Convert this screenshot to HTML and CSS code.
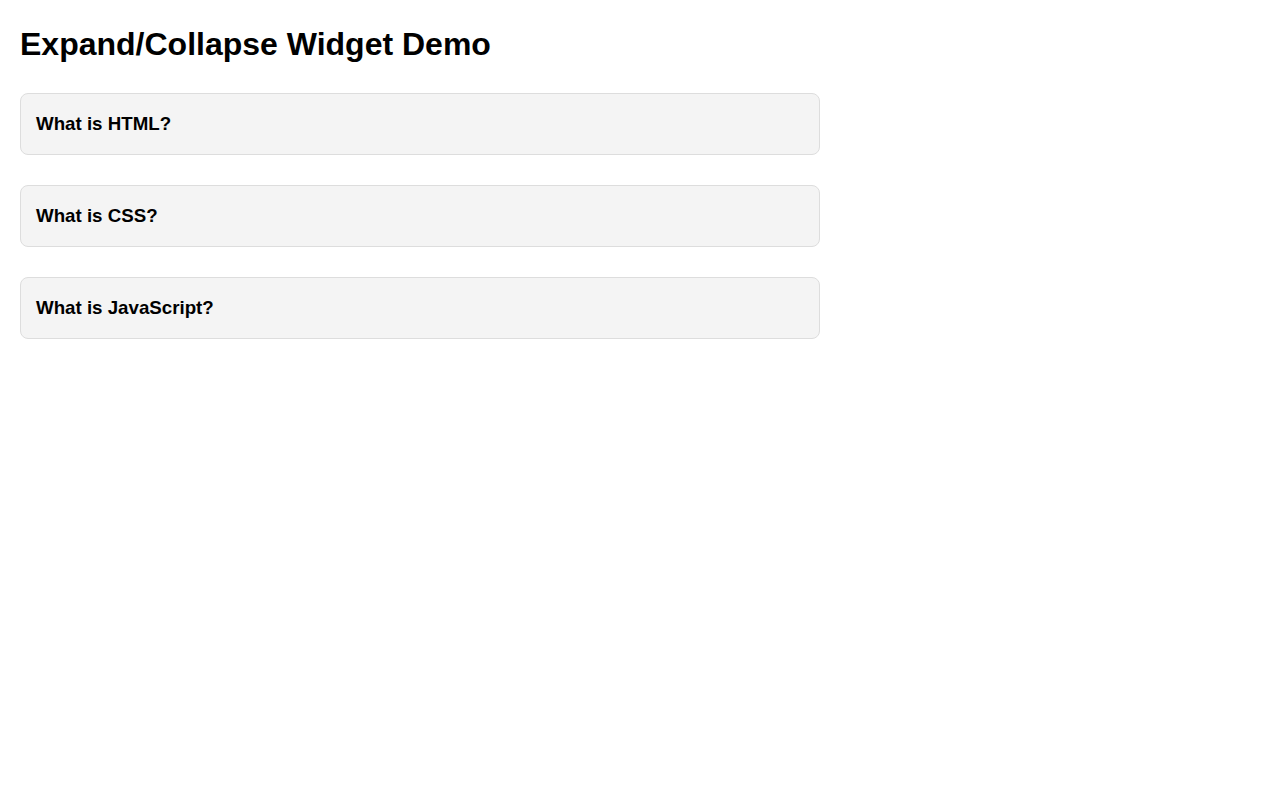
FILE: index.html
```html
<!DOCTYPE html>
<html>
<head>
<meta charset="utf-8">
<title>Expand/Collapse Widget Demo</title>
<link rel="stylesheet" href="styles.css">
</head>
<body>
<h1 class="title">Expand/Collapse Widget Demo</h1>
<div class="widgets">
  <div class="widget"><h3 class="widget-header">What is HTML?</h3></div>
  <div class="widget"><h3 class="widget-header">What is CSS?</h3></div>
  <div class="widget"><h3 class="widget-header">What is JavaScript?</h3></div>
</div>
</body>
</html>
```
FILE: styles.css
```css
html, body {
  margin: 0;
  padding: 0;
  background: #fff;
}
body {
  padding: 20px;
  font-family: "Liberation Sans", Arial, sans-serif;
  color: #000;
}
.title {
  font-size: 32px;
  font-weight: bold;
  margin: 6px 0 0;
  line-height: 37px;
}
.widgets {
  display: flex;
  flex-direction: column;
  gap: 30.5px;
  width: 800px;
  margin-top: 30px;
}
.widget {
  border: 1px solid #dddddd;
  border-radius: 8px;
  background: #f4f4f4;
  padding: 15px;
}
.widget-header {
  margin: 0;
  font-size: 18.72px;
  font-weight: bold;
  line-height: 29.5px;
}
```
